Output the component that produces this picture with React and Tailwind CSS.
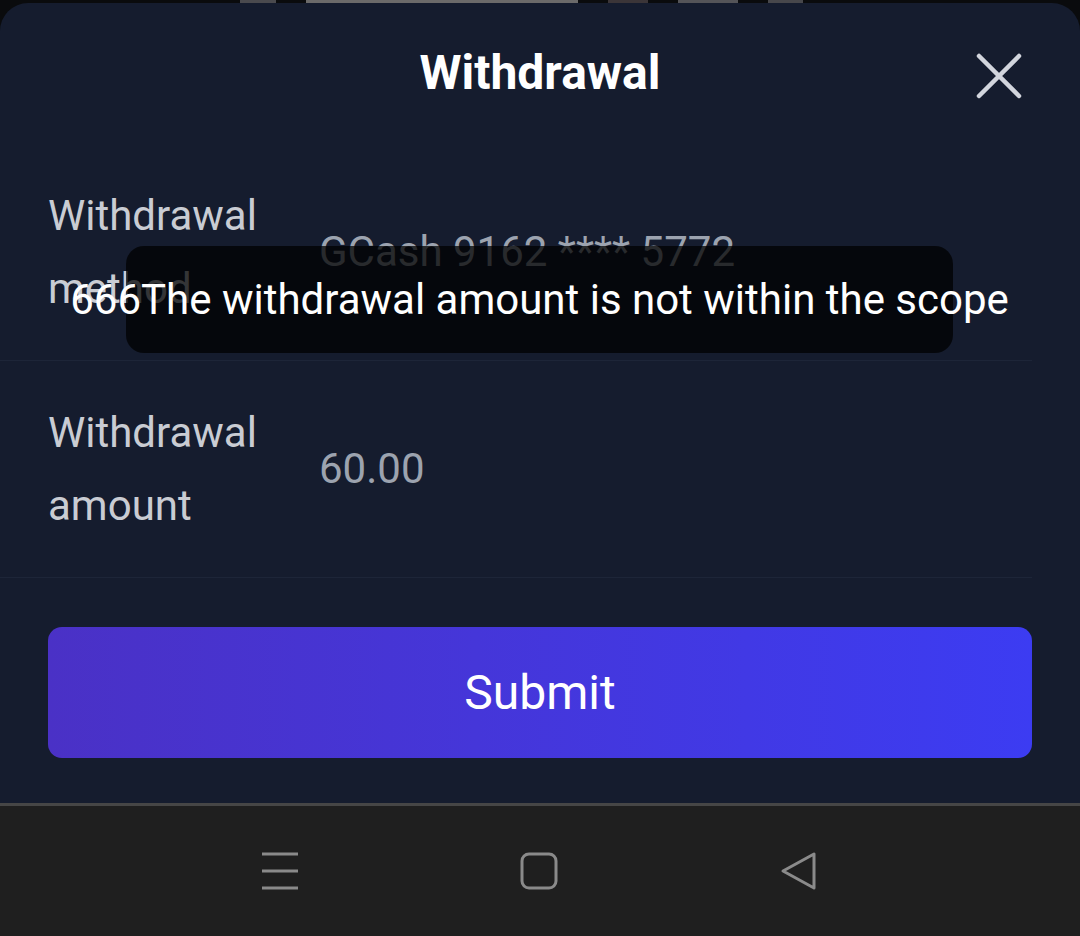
const Row = ({ label, value, valueClass = "text-[#9ca3af]" }) => (
  <div className="mr-[48px] flex items-center border-b border-[#1d2538] py-[35px] pl-[48px]">
    <div className="w-[271px] shrink-0 text-[42px] leading-[73px] text-[#c9ccd3]">
      {label}
    </div>
    <div className={`text-[42px] leading-none ${valueClass}`}>{value}</div>
  </div>
);

export default function App() {
  return (
    <div
      className="flex h-[936px] w-[1080px] flex-col overflow-hidden bg-[#0a0b0d]"
      style={{ fontFamily: "Roboto, 'Noto Sans', sans-serif" }}
    >
      {/* sliver of the page behind the sheet */}
      <div className="flex h-[3px] shrink-0 items-end gap-[30px] pl-[240px]">
        <div className="h-[3px] w-[36px] bg-[#4a4a4e]" />
        <div className="h-[3px] w-[272px] bg-[#6b6a6a]" />
        <div className="h-[3px] w-[40px] bg-[#3b3538]" />
        <div className="h-[3px] w-[60px] bg-[#545458]" />
        <div className="h-[3px] w-[35px] bg-[#47474b]" />
      </div>

      <div className="relative flex flex-1 flex-col rounded-t-[28px] bg-[#151c2e]">
        <div className="relative flex h-[141px] shrink-0 items-center justify-center pb-[1px]">
          <h1 className="text-[48px] font-bold leading-none text-white">Withdrawal</h1>
          <svg
            className="absolute right-[58px] top-[50px]"
            width="46"
            height="46"
            viewBox="0 0 46 46"
            fill="none"
            stroke="#d2d5dd"
            strokeWidth="4.5"
            strokeLinecap="round"
          >
            <path d="M3 3 L43 43 M43 3 L3 43" />
          </svg>
        </div>

        <Row label={<>Withdrawal<br />method</>} value="GCash 9162 **** 5772" />
        <Row label={<>Withdrawal<br />amount</>} value="60.00" />

        <div className="px-[48px] pt-[49px]">
          <button className="flex h-[131px] w-full items-center justify-center rounded-[14px] bg-gradient-to-r from-[#4a31c6] to-[#3c3cf2] text-[48px] text-white">
            Submit
          </button>
        </div>

        {/* toast */}
        <div className="absolute left-[126px] top-[243px] flex h-[107px] w-[827px] items-center justify-center rounded-[18px] bg-[#000000]/[0.74]">
          <span className="whitespace-nowrap text-[42px] leading-none text-white">
            666The withdrawal amount is not within the scope
          </span>
        </div>
      </div>

      <div className="flex h-[133px] shrink-0 items-center justify-center gap-[222px] border-t-[3px] border-[#464646] bg-[#1f1f1f] pb-[1px]">
        <svg width="36" height="38" viewBox="0 0 36 38" fill="none" stroke="#8a8a8a" strokeWidth="3">
          <path d="M0 2 H36 M0 19 H36 M0 36 H36" />
        </svg>
        <svg width="38" height="38" viewBox="0 0 38 38" fill="none" stroke="#8a8a8a" strokeWidth="3">
          <rect x="2" y="2" width="34" height="34" rx="7" />
        </svg>
        <svg width="38" height="40" viewBox="0 0 38 40" fill="none" stroke="#8a8a8a" strokeWidth="3" strokeLinejoin="round">
          <path d="M34 3 L34 37 L3 20 Z" />
        </svg>
      </div>
    </div>
  );
}
